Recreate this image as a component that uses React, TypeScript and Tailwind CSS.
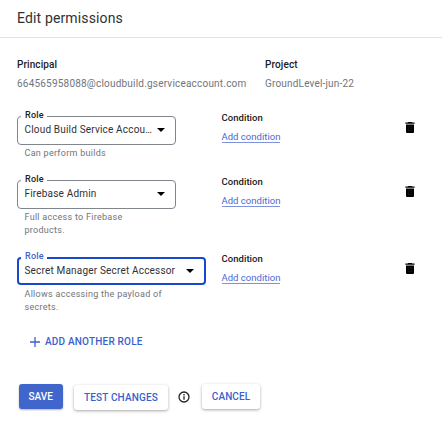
import React from 'react';

interface Role {
  name: string;
  help: string[];
  active?: boolean;
}

const roles: Role[] = [
  { name: 'Cloud Build Service Accou…', help: ['Can perform builds'] },
  { name: 'Firebase Admin', help: ['Full access to Firebase', 'products.'] },
  { name: 'Secret Manager Secret Accessor', help: ['Allows accessing the payload of', 'secrets.'], active: true },
];

function TrashIcon() {
  return (
    <svg className="h-[11px] w-[10px]" viewBox="0 0 10 11" aria-hidden="true">
      <path d="M3.3 0h3.4l.6.6H9.6v1.2H.4V.6h2.3z" fill="#000" />
      <path d="M1 2.6h8V10a1 1 0 0 1-1 1H2a1 1 0 0 1-1-1z" fill="#000" />
      <path d="M3.2 4.8h3.6v3.8H3.2z" fill="none" stroke="#222" strokeWidth=".5" />
    </svg>
  );
}

function RoleRow({ role }: { role: Role }) {
  return (
    <div className={`flex items-start ${role.help.length > 1 ? 'h-[77px]' : 'h-[64px]'}`}>
      <div className="w-[204.5px] shrink-0">
        <div
          className={`relative flex items-center justify-between rounded-[4px] ${
            role.active
              ? 'mb-[1px] h-[28px] w-[189px] border-2 border-[#1848d0] pr-[10px] pl-[5.5px]'
              : 'h-[29px] w-[159px] border border-[#80868b] pr-[10px] pb-[1px] pl-[6.5px]'
          }`}
        >
          <span
            className={`absolute w-[26px] bg-white pl-[4px] text-[9px] leading-[10px] font-medium tracking-[0.22px] ${
              role.active ? '-top-[8px] left-[2px] text-[#3b5fce]' : '-top-[7px] left-[3px] text-[#202124]'
            }`}
          >
            Role
          </span>
          <span className="whitespace-nowrap text-[10px] leading-[14px] tracking-[0.18px] text-[#303134]">{role.name}</span>
          <svg className="h-[4px] w-[8px] shrink-0" viewBox="0 0 8 4" aria-hidden="true">
            <path d="M0 0h8L4 4z" fill="#000" />
          </svg>
        </div>
        <div className="pt-[2px] pl-[7.5px] text-[9px] leading-[13px] tracking-[0.28px] text-[#70757a]">
          {role.help.map((line) => (
            <p key={line} className="whitespace-nowrap">{line}</p>
          ))}
        </div>
      </div>
      <div className="w-[183.5px]">
        <p className="-mt-[4px] text-[9.5px] leading-[12px] font-medium tracking-[0.05px] text-[#202124]">Condition</p>
        <a className="mt-[7px] block w-fit border-b border-[#7d93e0] text-[9.5px] leading-[11px] tracking-[0.02px] text-[#4a69d4]">
          Add condition
        </a>
      </div>
      <button className="mt-[6px]" aria-label="Delete role">
        <TrashIcon />
      </button>
    </div>
  );
}

export default function App() {
  return (
    <main className="h-[429px] w-[442px] overflow-hidden bg-white font-[Roboto,sans-serif]">
      <header className="flex h-[38px] items-center border-b border-[#e2e3e5] pb-[2px] pl-[17px]">
        <h1 className="text-[14px] leading-[20px] tracking-[0.14px] text-[#303134]">Edit permissions</h1>
      </header>
      <section className="flex h-[78px] pt-[20px] pl-[17px]">
        <div className="w-[248px]">
          <p className="text-[10px] leading-[13px] font-medium tracking-[0.08px] text-[#202124]">Principal</p>
          <p className="mt-[6px] text-[10px] leading-[13px] tracking-[0.2px] text-[#70757a]">
            664565958088@cloudbuild.gserviceaccount.com
          </p>
        </div>
        <div>
          <p className="text-[10px] leading-[13px] font-medium tracking-[0.12px] text-[#202124]">Project</p>
          <p className="mt-[6px] text-[10px] leading-[13px] tracking-[0.18px] text-[#70757a]">GroundLevel-jun-22</p>
        </div>
      </section>
      <section className="pl-[17px]">
        {roles.map((role) => (
          <RoleRow key={role.name} role={role} />
        ))}
      </section>
      <button className="ml-[30px] flex h-[15px] items-center gap-[5px] text-[10px] font-medium tracking-[0.2px] text-[#3b5fce]">
        <svg className="h-[10px] w-[10px]" viewBox="0 0 10 10" aria-hidden="true">
          <path d="M5 0v10M0 5h10" stroke="currentColor" strokeWidth="1.3" />
        </svg>
        ADD ANOTHER ROLE
      </button>
      <footer className="mt-[34px] flex items-start pl-[18.5px] text-[10px] font-medium text-[#3b5fce]">
        <button className="mt-[1px] h-[25px] w-[44.5px] rounded-[3px] bg-[#4066cc] text-white shadow-[0_1px_2px_rgba(0,0,0,0.3)]">SAVE</button>
        <button className="mt-[2px] ml-[11px] h-[25px] w-[94px] rounded-[3px] bg-white tracking-[0.16px] shadow-[0_1px_3px_rgba(0,0,0,0.35)]">TEST CHANGES</button>
        <svg className="mt-[8px] ml-[10px] h-[12px] w-[12px]" viewBox="0 0 12 12" aria-hidden="true">
          <circle cx="6" cy="6" r="5" fill="none" stroke="#202124" strokeWidth="1.3" />
          <path d="M6 5.3v3.5M6 3.1v1.3" stroke="#202124" strokeWidth="1.3" />
        </svg>
        <button className="mt-[1px] ml-[12px] h-[25px] w-[58px] rounded-[3px] bg-white tracking-[0.1px] shadow-[0_1px_3px_rgba(0,0,0,0.35)]">CANCEL</button>
      </footer>
    </main>
  );
}
